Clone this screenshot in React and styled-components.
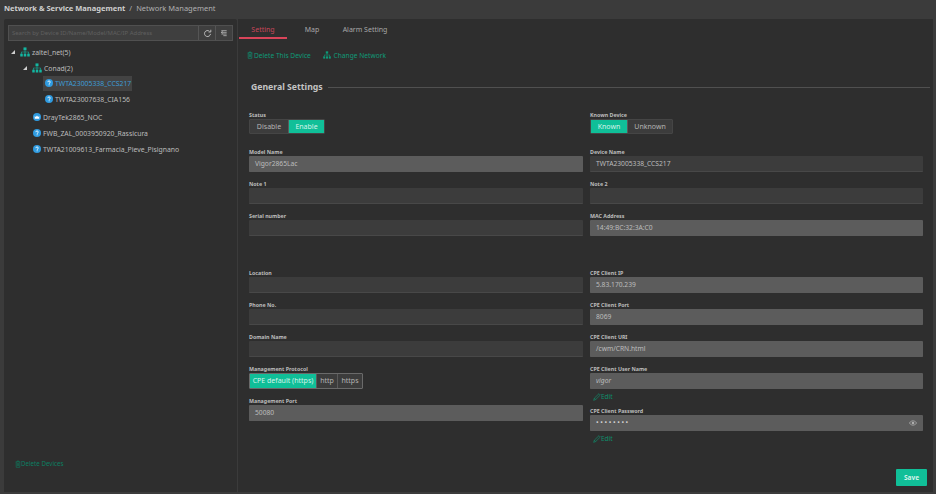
import React from 'react'
import styled, { createGlobalStyle } from 'styled-components'

const GlobalStyle = createGlobalStyle`
  html, body { margin: 0; padding: 0; background: #3b3b3b; }
  body { width: 936px; height: 494px; overflow: hidden; font-family: "Noto Sans", "Open Sans", sans-serif; }
  * { box-sizing: border-box; }
`

const Page = styled.div`
  width: 936px;
  height: 494px;
  display: flex;
  flex-direction: column;
  background: #3b3b3b;
  color: #c8c8c8;
`
const Header = styled.div`
  height: 19px;
  padding: 0 4px 4px;
  display: flex;
  align-items: center;
  gap: 4px;
  font-size: 7.5px;
`
const Crumb = styled.span`
  font-weight: 700;
  color: #cfcfcf;
`
const CrumbSub = styled.span`
  color: #b0b0b0;
`
const Body = styled.div`
  flex: 1;
  display: flex;
  gap: 1px;
  padding: 0 3px 2px 4px;
`
const LeftPanel = styled.div`
  width: 233px;
  background: #2e2e2e;
  border-radius: 2px 2px 0 0;
  padding: 6px 4px 0;
  display: flex;
  flex-direction: column;
`
const SearchBar = styled.div`
  height: 16px;
  display: flex;
  background: #3f3f3f;
  border: 1px solid #505050;
`
const SearchText = styled.div`
  flex: 1;
  padding-left: 3px;
  font-size: 5.95px;
  line-height: 14px;
  color: #5f5f5f;
`
const SearchBtn = styled.div`
  width: 17px;
  display: flex;
  align-items: center;
  justify-content: center;
  border-left: 1px solid #555;
  color: #c4c4c4;
`
const Tree = styled.div`
  flex: 1;
  padding-top: 3px;
`
const TreeRow = styled.div`
  height: 16px;
  display: flex;
  align-items: center;
  margin-top: ${p => p.$gap || 0}px;
  padding-left: ${p => p.$indent}px;
  font-size: 6.85px;
  color: #bdbdbd;
`
const Caret = styled.span`
  width: 0;
  height: 0;
  margin-right: 5px;
  border-style: solid;
  border-width: 0 0 4px 4px;
  border-color: transparent transparent #cfcfcf transparent;
`
const TreeLabel = styled.span`
  margin-left: 2px;
  color: ${p => (p.$selected ? '#3d9bd6' : 'inherit')};
`
const SelectedBox = styled.span`
  display: flex;
  align-items: center;
  height: 15px;
  padding: 0 1px 0 2px;
  margin-left: -2px;
  background: #434343;
`
const LeftFooter = styled.div`
  display: flex;
  align-items: center;
  padding: 0 0 24px 7px;
  font-size: 6.2px;
  color: #0c7f62;
`
const RightPanel = styled.div`
  flex: 1;
  background: #2e2e2e;
  display: flex;
  flex-direction: column;
`
const Tabs = styled.div`
  height: 20px;
  display: flex;
  padding-left: 1px;
`
const Tab = styled.div`
  width: ${p => p.$w}px;
  text-align: center;
  font-size: 7px;
  line-height: 21px;
  height: 20px;
  color: ${p => (p.$active ? '#c8465a' : '#a8a8a8')};
  border-bottom: ${p => (p.$active ? '2px solid #d9455a' : 'none')};
`
const Actions = styled.div`
  height: 16px;
  margin-top: 8px;
  padding-left: 9px;
  display: flex;
  align-items: center;
  gap: 12px;
  font-size: 6.65px;
  color: #0e9a78;
`
const ActionLink = styled.span`
  display: flex;
  align-items: center;
  gap: 1px;
`
const SectionTitle = styled.div`
  height: 14px;
  margin: 17px 3px 0 13px;
  display: flex;
  align-items: center;
  gap: 5px;
  font-size: 8.7px;
  font-weight: 700;
  color: #c4c4c4;
`
const TitleRule = styled.div`
  flex: 1;
  height: 1px;
  background: #505050;
`
const Columns = styled.div`
  display: grid;
  grid-template-columns: 334px 333px;
  gap: 7px;
  padding: 17px 0 0 11px;
`
const Column = styled.div`
  display: flex;
  flex-direction: column;
`
const Field = styled.div`
  display: flex;
  flex-direction: column;
  margin-top: ${p => p.$mt ?? 0}px;
`
const Label = styled.div`
  font-size: 5.3px;
  font-weight: 700;
  line-height: 9px;
  height: 7px;
  color: #bdbdbd;
`
const Input = styled.div`
  height: 16px;
  margin-top: 1px;
  padding: 0 6px;
  display: flex;
  align-items: center;
  justify-content: space-between;
  font-size: 6.7px;
  font-style: ${p => (p.$italic ? 'italic' : 'normal')};
  color: #bcbcbc;
  border-radius: 1px;
  background: ${p => (p.$readonly ? '#5c5c5c' : '#3c3c3c')};
  border-bottom: 1px solid ${p => (p.$readonly ? '#5c5c5c' : '#484848')};
`
const Dots = styled.span`
  font-size: 7px;
  letter-spacing: 1.6px;
  color: #d0d0d0;
`
const Toggle = styled.div`
  display: inline-flex;
  align-self: flex-start;
  height: ${p => (p.$outlined ? 16 : 15)}px;
  margin-top: 1px;
  border: 1px solid ${p => (p.$outlined ? '#6a6a6a' : '#454545')};
  border-radius: 1px;
`
const ToggleItem = styled.div`
  width: ${p => p.$w}px;
  text-align: center;
  font-size: 7px;
  line-height: ${p => (p.$tall ? 14 : 13)}px;
  color: ${p => (p.$on ? '#d6f3ea' : '#b4b4b4')};
  background: ${p => (p.$on ? '#10bf98' : '#3c3c3c')};
  & + & { border-left: 1px solid #5a5a5a; }
`
const EditLink = styled.div`
  display: flex;
  align-items: center;
  height: 14px;
  padding: 1px 0 0 3px;
  font-size: 6.5px;
  color: #0f8f6d;
`
const Footer = styled.div`
  display: flex;
  justify-content: flex-end;
  padding: 24px 6px 0 0;
`
const SaveButton = styled.div`
  width: 31px;
  height: 17px;
  border-radius: 1px;
  background: #10bf98;
  color: #d6f3ea;
  font-size: 6.5px;
  font-weight: 700;
  line-height: 17px;
  text-align: center;
`

const Hierarchy = ({ color = '#13b5a0', size = 10 }) => (
  <svg width={size} height={size} viewBox="0 0 12 12" fill={color}>
    <rect x="4.2" y="0.5" width="3.6" height="3.4" />
    <rect x="0.3" y="8" width="3" height="3.4" />
    <rect x="4.5" y="8" width="3" height="3.4" />
    <rect x="8.7" y="8" width="3" height="3.4" />
    <path d="M5.6 3.9h.8v1.7h4.1V8h-.8V6.4H6.4V8h-.8V6.4H2.3V8h-.8V5.6h4.1z" />
  </svg>
)

const Question = () => (
  <svg width="8" height="8" viewBox="0 0 12 12">
    <circle cx="6" cy="6" r="6" fill="#2f9be0" />
    <path d="M4.2 4.7c0-1.2.8-1.8 1.9-1.8s1.8.7 1.8 1.6c0 1.4-1.6 1.4-1.6 2.7" fill="none" stroke="#fff" strokeWidth="1.3" />
    <rect x="5.5" y="8" width="1.4" height="1.4" fill="#fff" />
  </svg>
)

const RouterDot = () => (
  <svg width="8" height="8" viewBox="0 0 12 12">
    <circle cx="6" cy="6" r="6" fill="#2f9be0" />
    <path d="M2.6 8.6V4.4l1.7 1.5L6 3.6l1.7 2.3 1.7-1.5v4.2z" fill="#fff" />
  </svg>
)

const Refresh = () => (
  <svg width="9" height="9" viewBox="0 0 12 12" fill="none" stroke="currentColor" strokeWidth="1.2">
    <path d="M10 6.5A4 4 0 1 1 8.6 3" />
    <path d="M10.4 1v3H7.4" />
  </svg>
)

const Collapse = () => (
  <svg width="8" height="8" viewBox="0 0 12 12" fill="none" stroke="currentColor" strokeWidth="1.1">
    <path d="M2 2.5h8M2 5h8M2 7.5h8M5 10h5" />
    <path d="M4 3.5L2 5l2 1.5" />
  </svg>
)

const Trash = () => (
  <svg width="6" height="8" viewBox="0 0 10 12" fill="none" stroke="currentColor" strokeWidth="1">
    <path d="M1 2.5h8M3.5 2.5V1h3v1.5M2 2.5v9h6v-9M4 4.5v5M6 4.5v5" />
  </svg>
)

const Pencil = () => (
  <svg width="8" height="8" viewBox="0 0 12 12" fill="none" stroke="currentColor" strokeWidth="1">
    <path d="M1 11l1-3.2L9 1l2 2-7 6.8zM2 7.8L4 9.8" />
  </svg>
)

const Eye = () => (
  <svg width="8" height="6" viewBox="0 0 12 8" fill="none" stroke="#b8b8b8" strokeWidth="1">
    <path d="M.6 4C2 1.8 4 .7 6 .7s4 1.1 5.4 3.3C10 6.2 8 7.3 6 7.3S2 6.2.6 4z" />
    <circle cx="6" cy="4" r="1.5" fill="#b8b8b8" />
  </svg>
)

const TextField = ({ label, value, readonly, italic, mt, children }) => (
  <Field $mt={mt}>
    <Label>{label}</Label>
    <Input $readonly={readonly} $italic={italic}>
      <span>{value}</span>
      {children}
    </Input>
  </Field>
)

export default function App() {
  return (
    <Page>
      <GlobalStyle />
      <Header>
        <Crumb>Network &amp; Service Management</Crumb>
        <CrumbSub>/</CrumbSub>
        <CrumbSub>Network Management</CrumbSub>
      </Header>
      <Body>
        <LeftPanel>
          <SearchBar>
            <SearchText>Search by Device ID/Name/Model/MAC/IP Address</SearchText>
            <SearchBtn><Refresh /></SearchBtn>
            <SearchBtn><Collapse /></SearchBtn>
          </SearchBar>
          <Tree>
            <TreeRow $indent={3}><Caret /><Hierarchy /><TreeLabel>zaltel_net(5)</TreeLabel></TreeRow>
            <TreeRow $indent={15}><Caret /><Hierarchy /><TreeLabel>Conad(2)</TreeLabel></TreeRow>
            <TreeRow $indent={37} $gap={-1}>
              <SelectedBox><Question /><TreeLabel $selected>TWTA23005338_CCS217</TreeLabel></SelectedBox>
            </TreeRow>
            <TreeRow $indent={37}><Question /><TreeLabel>TWTA23007638_CIA156</TreeLabel></TreeRow>
            <TreeRow $indent={25} $gap={2}><RouterDot /><TreeLabel>DrayTek2865_NOC</TreeLabel></TreeRow>
            <TreeRow $indent={25}><Question /><TreeLabel>FWB_ZAL_0003950920_Rassicura</TreeLabel></TreeRow>
            <TreeRow $indent={25}><Question /><TreeLabel>TWTA21009613_Farmacia_Pieve_Pisignano</TreeLabel></TreeRow>
          </Tree>
          <LeftFooter><Trash />Delete Devices</LeftFooter>
        </LeftPanel>
        <RightPanel>
          <Tabs>
            <Tab $w={48} $active>Setting</Tab>
            <Tab $w={50}>Map</Tab>
            <Tab $w={56}>Alarm Setting</Tab>
          </Tabs>
          <Actions>
            <ActionLink><Trash />Delete This Device</ActionLink>
            <ActionLink><Hierarchy color="#0e9a78" size={8} />&nbsp;Change Network</ActionLink>
          </Actions>
          <SectionTitle>General Settings<TitleRule /></SectionTitle>
          <Columns>
            <Column>
              <Field>
                <Label>Status</Label>
                <Toggle>
                  <ToggleItem $w={38}>Disable</ToggleItem>
                  <ToggleItem $w={36} $on>Enable</ToggleItem>
                </Toggle>
              </Field>
              <TextField mt={14} label="Model Name" value="Vigor2865Lac" readonly />
              <TextField mt={8} label="Note 1" />
              <TextField mt={8} label="Serial number" />
              <TextField mt={33} label="Location" />
              <TextField mt={8} label="Phone No." />
              <TextField mt={8} label="Domain Name" />
              <Field $mt={8}>
                <Label>Management Protocol</Label>
                <Toggle $outlined>
                  <ToggleItem $w={66} $on $tall>CPE default (https)</ToggleItem>
                  <ToggleItem $w={21} $tall>http</ToggleItem>
                  <ToggleItem $w={25} $tall>https</ToggleItem>
                </Toggle>
              </Field>
              <TextField mt={8} label="Management Port" value="50080" readonly />
            </Column>
            <Column>
              <Field>
                <Label>Known Device</Label>
                <Toggle>
                  <ToggleItem $w={36} $on>Known</ToggleItem>
                  <ToggleItem $w={45}>Unknown</ToggleItem>
                </Toggle>
              </Field>
              <TextField mt={14} label="Device Name" value="TWTA23005338_CCS217" />
              <TextField mt={8} label="Note 2" />
              <TextField mt={8} label="MAC Address" value="14:49:BC:32:3A:C0" readonly />
              <TextField mt={33} label="CPE Client IP" value="5.83.170.239" readonly />
              <TextField mt={8} label="CPE Client Port" value="8069" readonly />
              <TextField mt={8} label="CPE Client URI" value="/cwm/CRN.html" readonly />
              <TextField mt={8} label="CPE Client User Name" value="vigor" readonly italic />
              <EditLink><Pencil />Edit</EditLink>
              <TextField mt={4} label="CPE Client Password" value={<Dots>••••••••</Dots>} readonly><Eye /></TextField>
              <EditLink><Pencil />Edit</EditLink>
            </Column>
          </Columns>
          <Footer><SaveButton>Save</SaveButton></Footer>
        </RightPanel>
      </Body>
    </Page>
  )
}
